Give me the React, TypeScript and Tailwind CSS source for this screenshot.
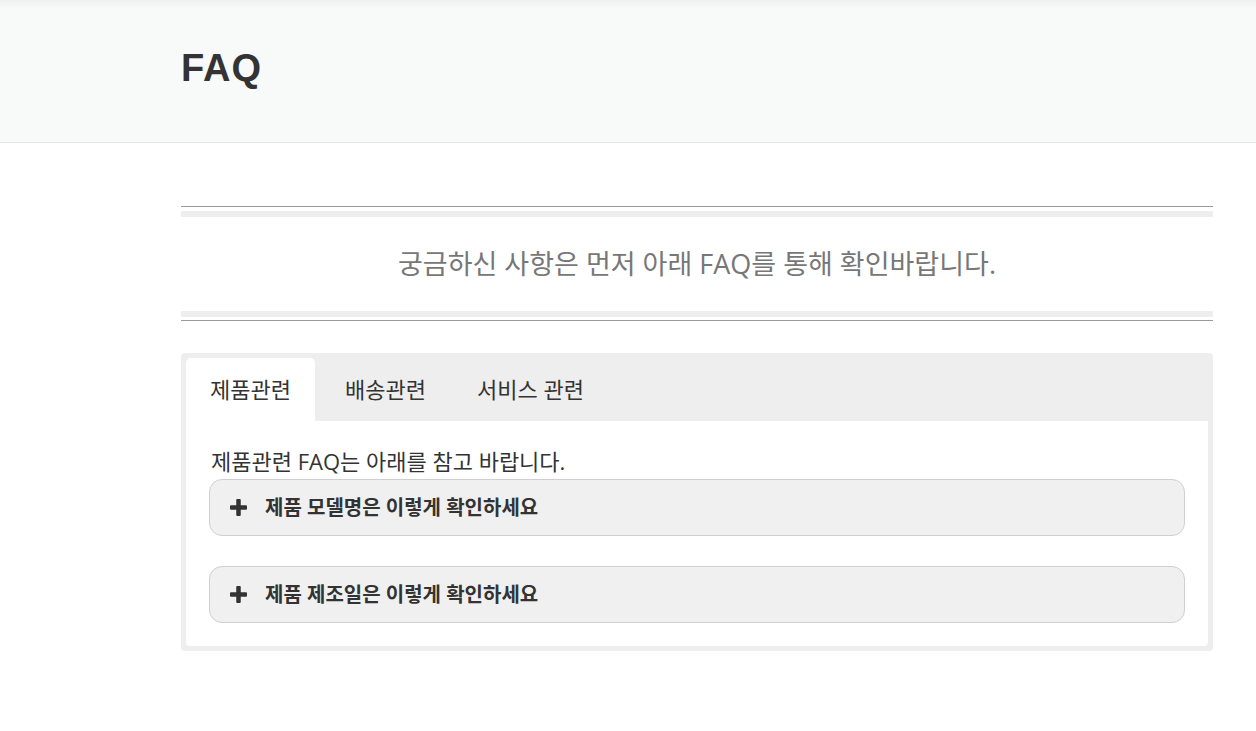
import React from "react";

const KR = { fontFamily: '"Open Sans", "Noto Sans CJK KR", sans-serif' } as React.CSSProperties;

function Plus() {
  return (
    <svg width="17" height="17" viewBox="0 0 17 17" className="shrink-0">
      <rect x="6.25" y="0" width="4.5" height="17" rx="1" fill="#333" />
      <rect x="0" y="6.25" width="17" height="4.5" rx="1" fill="#333" />
    </svg>
  );
}

function Item({ title }: { title: string }) {
  return (
    <div className="flex h-[57px] items-center rounded-[13px] border border-[#cfcfcf] bg-[#f0f0f0] pl-[20px]">
      <Plus />
      <span className="ml-[18px] text-[20px] font-bold leading-[26px] text-[#333]">{title}</span>
    </div>
  );
}

export default function App() {
  return (
    <div className="min-h-[731px] bg-white" style={KR}>
      <header className="h-[143px] border-b border-[#e6e6e6] bg-[#f8f9f9] shadow-[inset_0_8px_8px_-6px_rgba(0,0,0,0.06)]">
        <div className="ml-[181px] w-[1032px] pt-[44px]">
          <h1 className="text-[38px] font-bold leading-[48px] tracking-[1px] text-[#333]" style={{ fontFamily: '"Liberation Sans", Arial, sans-serif' }}>
            FAQ
          </h1>
        </div>
      </header>
      <main className="ml-[181px] w-[1032px] pt-[63px]">
        <div className="border-t border-[#999]">
          <div className="mt-[4px] h-[6px] bg-[#eeeeee]" />
          <div className="flex h-[94px] items-center justify-center text-[27px] text-[#777]">
            궁금하신 사항은 먼저 아래 FAQ를 통해 확인바랍니다.
          </div>
          <div className="h-[6px] bg-[#eeeeee]" />
          <div className="mt-[3px] border-t border-[#999]" />
        </div>
        <div className="mt-[32px] rounded-[4px] bg-[#eeeeee] p-[5px] pb-[5px]">
          <div className="flex h-[63px] items-stretch text-[22px] text-[#333]">
            <div className="flex w-[129px] items-center justify-center rounded-t-[5px] bg-white">제품관련</div>
            <div className="flex items-center pl-[30px]">배송관련</div>
            <div className="flex items-center pl-[51px]">서비스 관련</div>
          </div>
          <div className="rounded-b-[4px] bg-white px-[23px] pb-[23px] pt-[26px]">
            <p className="pl-[2px] text-[22px] leading-[28px] text-[#333]">제품관련 FAQ는 아래를 참고 바랍니다.</p>
            <div className="mt-[4px] flex flex-col gap-[30px]">
              <Item title="제품 모델명은 이렇게 확인하세요" />
              <Item title="제품 제조일은 이렇게 확인하세요" />
            </div>
          </div>
        </div>
      </main>
    </div>
  );
}
